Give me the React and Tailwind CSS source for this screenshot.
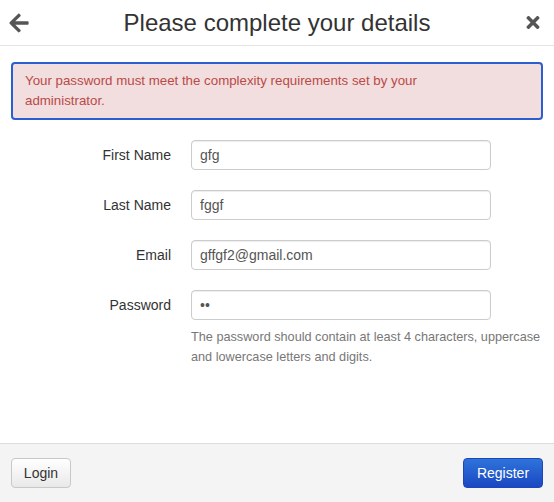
import { FaArrowLeft, FaTimes } from 'react-icons/fa'

const FIELDS = [
  { label: 'First Name', value: 'gfg', type: 'text' },
  { label: 'Last Name', value: 'fggf', type: 'text' },
  { label: 'Email', value: 'gffgf2@gmail.com', type: 'text' },
  { label: 'Password', value: '••', type: 'password' },
]

const Field = ({ label, value }) => (
  <div className="flex items-center">
    <label className="w-[171px] shrink-0 text-right text-[14px] text-[#333]">{label}</label>
    <div className="ml-[20px] flex h-[30px] w-[300px] items-center rounded-[4px] border border-[#ccc] bg-white px-[8px] text-[14px] text-[#555] shadow-[inset_0_1px_1px_rgba(0,0,0,0.075)]">
      {value}
    </div>
  </div>
)

export default function App() {
  return (
    <div className="flex h-[502px] w-[554px] flex-col bg-white font-['Liberation_Sans',Arial,sans-serif]">
      <header className="flex h-[46px] shrink-0 items-center justify-between border-b border-[#e5e5e5] px-[8px]">
        <FaArrowLeft className="h-[22px] w-[22px] text-[#555]" />
        <h1 className="text-[24px] text-[#333]">Please complete your details</h1>
        <FaTimes className="mr-[4px] h-[19px] w-[18px] text-[#555]" />
      </header>

      <div className="mx-[11px] mt-[16px] rounded-[4px] border-2 border-[#2b5fd0] bg-[#f2dede] py-[7px] pl-[12px] pr-[70px] text-[13.3px] leading-[20px] text-[#b94a48]">
        Your password must meet the complexity requirements set by your administrator.
      </div>

      <div className="mt-[20px] flex flex-col gap-[20px]">
        {FIELDS.map((f) => (
          <Field key={f.label} {...f} />
        ))}
      </div>
      <p className="ml-[191px] mt-[7px] w-[363px] text-[12.7px] leading-[20px] text-[#777]">
        The password should contain at least 4 characters, uppercase and lowercase letters and digits.
      </p>

      <footer className="mt-auto flex h-[59px] shrink-0 items-center justify-between border-t border-[#ddd] bg-[#f4f4f4] px-[11px]">
        <button className="h-[30px] w-[60px] rounded-[4px] border border-[#c8c8c8] bg-gradient-to-b from-white to-[#e9e9e9] text-[14px] text-[#333]">
          Login
        </button>
        <button className="h-[30px] w-[80px] rounded-[4px] border border-[#1c47b8] bg-gradient-to-b from-[#2f73db] to-[#1b47c2] text-[14px] text-white">
          Register
        </button>
      </footer>
    </div>
  )
}
